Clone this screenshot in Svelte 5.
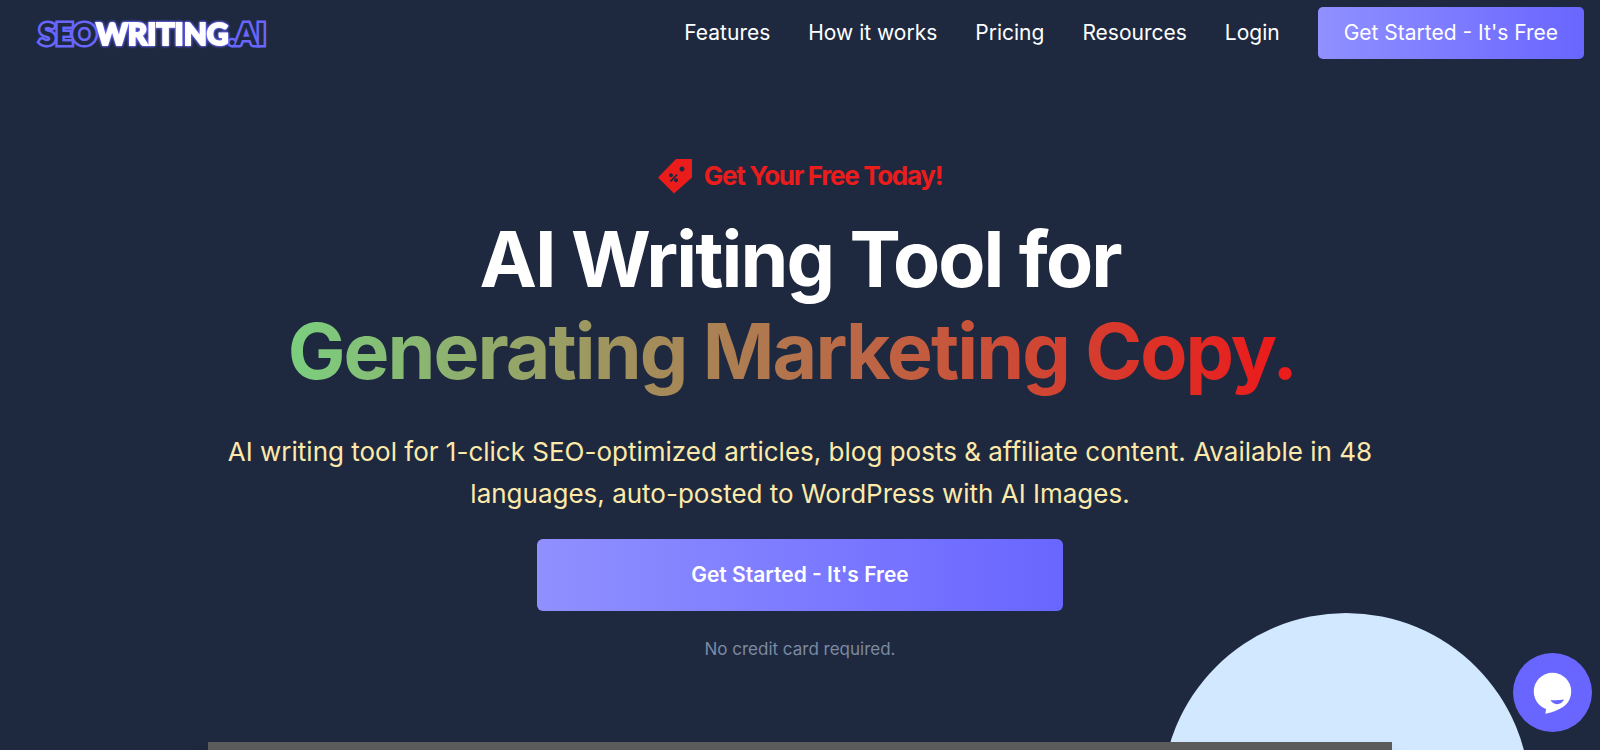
<script lang="ts">
	const links = [
		{ label: 'Features', href: '#features' },
		{ label: 'How it works', href: '#how' },
		{ label: 'Pricing', href: '#pricing' },
		{ label: 'Resources', href: '#resources' },
		{ label: 'Login', href: '#login' }
	];
</script>

<div class="page">
	<header class="site-header">
		<a href="/" class="logo"><span class="outline">SEO</span><span class="solid">WRITING</span><span class="outline">.AI</span></a>
		<nav class="site-nav">
			{#each links as link}
				<a href={link.href}>{link.label}</a>
			{/each}
			<a href="#start" class="button">Get Started - It's Free</a>
		</nav>
	</header>

	<main class="hero">
		<p class="offer">
			<svg class="tag" viewBox="0 0 34 35" aria-hidden="true">
				<path
					fill="currentColor"
					fill-rule="evenodd"
					d="M18 0H34V18.500L16 34.500L0 18.500ZM24 7.500a2.500 2.500 0 1 0 .01 0ZM13 14.200a2 2 0 1 0 .01 0ZM18 19.200a2 2 0 1 0 .01 0Z"
				/>
				<path d="M12.500 22.500L19 15.500" stroke="#1e293f" stroke-width="1.800" />
			</svg>
			<span>Get Your Free Today!</span>
		</p>
		<h1>AI Writing Tool for<br /><span class="gradient">Generating Marketing Copy.&nbsp;</span></h1>
		<p class="lead">
			AI writing tool for 1-click SEO-optimized articles, blog posts &amp; affiliate content. Available in 48
			languages, auto-posted to WordPress with AI Images.
		</p>
		<a href="#start" class="button large">Get Started - It's Free</a>
		<p class="note">No credit card required.</p>
	</main>

	<section class="preview">
		<div class="circle"></div>
		<div class="video"></div>
	</section>

	<button class="chat" aria-label="Open chat">
		<svg viewBox="0 0 78 78" aria-hidden="true">
			<circle cx="39" cy="38" r="18.500" fill="#fff" />
			<path d="M33 53L32 60Q43 58 50 52L44 46Z" fill="#fff" />
			<path d="M37 46.500Q44 47 50.500 46Q48 50.500 43.500 50.500Q39 50.500 37 46.500Z" fill="#6966ff" />
		</svg>
	</button>
</div>

<style>
	:global(body) {
		margin: 0;
		background: #1e293f;
	}

	.page {
		position: relative;
		height: 100vh;
		overflow: hidden;
		font-family: Inter, sans-serif;
		color: #fff;
		background: #1e293f;
	}

	a {
		color: inherit;
		text-decoration: none;
	}

	/* === HEADER === */
	.site-header {
		display: flex;
		justify-content: space-between;
		align-items: center;
		padding: 7px 16px 7px 39px;
	}

	.logo {
		font-family: Lato, sans-serif;
		font-size: 30px;
		line-height: 40px;
		font-weight: 900;
	}

	.outline {
		color: #1e293f;
		-webkit-text-stroke: 5px #6966ff;
		paint-order: stroke fill;
	}

	.solid {
		color: #fff;
		-webkit-text-stroke: 2px #fff;
		filter: drop-shadow(0 0 1px #6966ff) drop-shadow(0 0 1px #6966ff);
	}

	.site-nav {
		display: flex;
		align-items: center;
		gap: 38px;
		font-size: 21px;
		line-height: 32px;
	}

	.button {
		box-sizing: border-box;
		padding: 10px 26px;
		border-radius: 5px;
		background: linear-gradient(to right, #9090ff, #6966ff);
		text-align: center;
	}

	/* === HERO === */
	.hero {
		display: flex;
		flex-direction: column;
		align-items: center;
		padding: 92px 32px 0;
		text-align: center;
	}

	.offer {
		display: flex;
		align-items: center;
		gap: 12px;
		margin: 0;
		color: #ea1c1c;
		font-size: 26px;
		line-height: 36px;
		font-weight: 700;
		letter-spacing: -0.05em;
	}

	.tag {
		width: 34px;
		height: 35px;
	}

	h1 {
		margin: 19px 0 0;
		font-size: 77px;
		line-height: 92px;
		font-weight: 700;
		letter-spacing: -0.025em;
	}

	.gradient {
		background: linear-gradient(to right, #7bcf7f, #ea1c1c 96%);
		background-clip: text;
		-webkit-background-clip: text;
		color: transparent;
	}

	.lead {
		max-width: 1184px;
		margin: 34px 0 0;
		color: #fde9a9;
		font-size: 26px;
		line-height: 42px;
	}

	.large {
		width: 526px;
		max-width: 100%;
		margin-top: 24px;
		padding: 20px 26px;
		border-radius: 6px;
		font-size: 21px;
		line-height: 32px;
		font-weight: 600;
	}

	.note {
		margin: 25px 0 0;
		color: #7b89a3;
		font-size: 17px;
		line-height: 26px;
	}

	/* === PREVIEW === */
	.preview {
		position: relative;
		max-width: 1184px;
		margin: 80px auto 0;
	}

	.circle {
		position: absolute;
		top: -129px;
		right: -138px;
		width: 368px;
		height: 368px;
		border-radius: 50%;
		background: #d2e8ff;
	}

	.video {
		position: relative;
		height: 640px;
		background: #5b5b5b;
		box-shadow: 0 20px 20px rgba(0, 0, 0, 0.3);
	}

	.chat {
		position: absolute;
		right: 8px;
		bottom: 18px;
		width: 79px;
		height: 79px;
		padding: 0;
		border: 0;
		border-radius: 50%;
		background: #6966ff;
		cursor: pointer;
	}

	.chat svg {
		display: block;
		width: 100%;
	}
</style>
